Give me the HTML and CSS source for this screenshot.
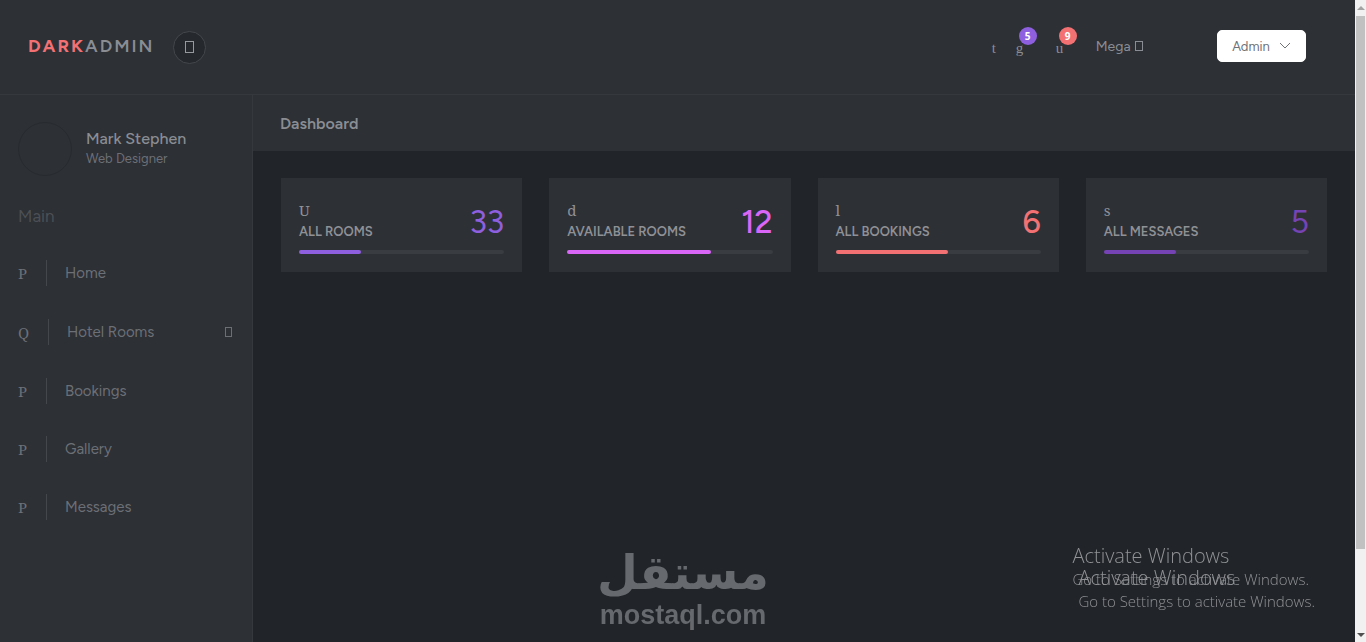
FILE: index.html
```html
<!DOCTYPE html>
<html lang="en">
<head>
<meta charset="UTF-8">
<meta name="viewport" content="width=device-width, initial-scale=1.0">
<title>Dark Admin</title>
<link rel="stylesheet" href="styles.css">
</head>
<body>
<div class="page">
  <header class="header">
    <div class="brand-area">
      <a href="#" class="brand"><strong>DARK</strong>ADMIN</a>
      <button class="sidebar-toggle" aria-label="Toggle sidebar"><span class="box"></span></button>
    </div>
    <nav class="right-menu">
      <a href="#" class="icon-link search">t</a>
      <a href="#" class="icon-link">g<span class="badge badge-1">5</span></a>
      <a href="#" class="icon-link">u<span class="badge badge-3">9</span></a>
      <a href="#" class="mega">Mega <span class="box box-sm"></span></a>
      <button class="admin">Admin
        <svg width="12" height="8" viewBox="0 0 12 8"><path d="M1 1l5 5 5-5" fill="none" stroke="currentColor"/></svg>
      </button>
    </nav>
  </header>
  <div class="main">
    <aside class="sidebar">
      <div class="profile">
        <div class="avatar"></div>
        <div>
          <h1>Mark Stephen</h1>
          <p>Web Designer</p>
        </div>
      </div>
      <span class="heading">Main</span>
      <ul class="menu">
        <li><a href="#"><i>P</i><span class="label">Home</span></a></li>
        <li><a href="#" class="dropdown"><i>Q</i><span class="label">Hotel Rooms</span><span class="box box-sm"></span></a></li>
        <li><a href="#"><i>P</i><span class="label">Bookings</span></a></li>
        <li><a href="#"><i>P</i><span class="label">Gallery</span></a></li>
        <li><a href="#"><i>P</i><span class="label">Messages</span></a></li>
      </ul>
    </aside>
    <div class="content">
      <div class="page-header"><h2>Dashboard</h2></div>
      <section class="stats">
        <div class="stat stat-1">
          <div class="details"><div class="title"><i>U</i><strong>ALL ROOMS</strong></div><div class="number">33</div></div>
          <div class="progress"><div class="bar" style="width: 30%"></div></div>
        </div>
        <div class="stat stat-2">
          <div class="details"><div class="title"><i>d</i><strong>AVAILABLE ROOMS</strong></div><div class="number">12</div></div>
          <div class="progress"><div class="bar" style="width: 70%"></div></div>
        </div>
        <div class="stat stat-3">
          <div class="details"><div class="title"><i>l</i><strong>ALL BOOKINGS</strong></div><div class="number">6</div></div>
          <div class="progress"><div class="bar" style="width: 55%"></div></div>
        </div>
        <div class="stat stat-4">
          <div class="details"><div class="title"><i>s</i><strong>ALL MESSAGES</strong></div><div class="number">5</div></div>
          <div class="progress"><div class="bar" style="width: 35%"></div></div>
        </div>
      </section>
    </div>
  </div>
</div>
<div class="scrollbar"><span class="arrow up"></span><span class="thumb"></span><span class="arrow down"></span></div>
<div class="watermark">
  <span class="watermark-ar" lang="ar" dir="rtl">مستقل</span>
  <span class="watermark-en">mostaql.com</span>
</div>
<div class="activate activate-back"><h3>Activate Windows</h3><p>Go to Settings to activate Windows.</p></div>
<div class="activate activate-front"><h3>Activate Windows</h3><p>Go to Settings to activate Windows.</p></div>
</body>
</html>
```
FILE: styles.css
```css
:root {
  --panel: #2d3035;
  --dark: #212429;
  --line: #35383d;
  --text: #8a8d93;
  --muted: #6c6f75;
  --violet: #8e5fdf;
  --pink: #da66f8;
  --red: #f47173;
  --purple: #7643b5;
}
* { box-sizing: border-box; }
body { margin: 0; background: var(--dark); color: var(--text); font-family: Figtree, Lato, sans-serif; font-size: 15px; overflow: hidden; }
h1, h2, h3, p, ul { margin: 0; padding: 0; }
a { color: inherit; text-decoration: none; }
i { font-family: "Noto Serif", "Liberation Serif", serif; font-style: normal; }
button { font: inherit; cursor: pointer; }

.page { min-height: 100vh; margin-right: 11px; display: flex; flex-direction: column; }
.header { height: 95px; padding: 0 49px 2px 28px; background: var(--panel); border-bottom: 1px solid var(--line); display: flex; align-items: center; justify-content: space-between; }
.brand-area { display: flex; align-items: center; gap: 18px; }
.brand { font-size: 18px; letter-spacing: 2px; line-height: 28px; font-weight: 600; }
.brand strong { color: var(--red); font-weight: 700; }
.sidebar-toggle { width: 33px; height: 33px; margin-top: 2px; padding: 0; border: 1px solid #44474c; border-radius: 50%; background: #25282d; color: #96999e; display: flex; align-items: center; justify-content: center; }
.box { display: inline-block; width: 9px; height: 12px; border: 1px solid currentColor; }
.box-sm { width: 7px; height: 10px; }

.right-menu { display: flex; align-items: center; }
.icon-link { position: relative; width: 20px; margin-right: 20px; padding-top: 4px; font-family: "Liberation Serif", serif; font-size: 15px; }
.search { margin-right: 4px; }
.badge { position: absolute; top: -9px; left: 3px; width: 18px; height: 18px; border-radius: 50%; color: #fff; font: 700 10px/18px "Open Sans", sans-serif; text-align: center; }
.badge-1 { background: var(--violet); }
.badge-3 { background: var(--red); }
.mega { margin-right: 74px; font-size: 14px; }
.mega .box { width: 8px; margin-left: 1px; }
.admin { width: 89px; height: 32px; padding: 0; border: 1px solid #fff; border-radius: 5px; background: #fff; color: #6f7277; font-size: 13px; display: flex; align-items: center; justify-content: center; gap: 9px; }

.main { flex: 1; display: flex; }
.sidebar { width: 253px; background: var(--panel); border-right: 1px solid var(--line); }
.profile { display: flex; align-items: center; gap: 14px; padding: 27px 18px; }
.avatar { width: 54px; height: 54px; border: 1px solid #272a2f; border-radius: 50%; }
.profile h1 { font-size: 16px; font-weight: 500; line-height: 20px; }
.profile p { font-size: 13px; line-height: 20px; color: var(--muted); }
.heading { display: block; padding: 0 18px; font-size: 17px; line-height: 26px; color: #4c4f54; }
.menu { list-style: none; margin-top: 15px; }
.menu a { display: flex; align-items: center; height: 58px; padding: 0 20px 0 18px; color: var(--muted); }
.menu i { width: 29px; margin-right: 18px; border-right: 1px solid #44474c; line-height: 26px; }
.menu .dropdown { height: 60px; }
.menu .dropdown i { width: 31px; }
.menu .box { margin-left: auto; }

.content { flex: 1; min-width: 0; }
.page-header { height: 56px; padding: 0 27px; background: var(--panel); display: flex; align-items: center; }
.page-header h2 { font-size: 16px; font-weight: 600; }
.stats { display: grid; grid-template-columns: repeat(4, 1fr); gap: 27px; padding: 27px 28px; }
.stat { height: 94px; padding: 22px 18px 0; background: var(--panel); color: var(--accent); }
.stat-1 { --accent: var(--violet); }
.stat-2 { --accent: var(--pink); }
.stat-3 { --accent: var(--red); }
.stat-4 { --accent: var(--purple); }
.details { display: flex; align-items: center; justify-content: space-between; }
.title { color: #8f9195; }
.title i { display: block; font-size: 15px; line-height: 20px; }
.title strong { display: block; font-size: 13px; font-weight: 600; line-height: 24px; }
.number { font-size: 32px; line-height: 44px; }
.stat-2 .number, .stat-3 .number { font-weight: 500; }
.progress { height: 4px; margin-top: 6px; border-radius: 2px; background: #393c41; }
.bar { height: 4px; border-radius: 2px; background: var(--accent); }

.scrollbar { position: fixed; top: 0; right: 0; bottom: 0; width: 11px; background: #f1f1f1; display: flex; flex-direction: column; align-items: center; justify-content: space-between; }
.thumb { width: 9px; flex: 1; margin: 6px 0 84px; background: #c1c1c1; }
.arrow { border: 4px solid transparent; }
.up { margin-top: 6px; border-top: 0; border-bottom-color: #a3a3a3; }
.down { margin-bottom: 5px; border-bottom: 0; border-top-color: #505050; }

.watermark { position: fixed; left: 50%; bottom: 12px; width: 166px; margin-left: -83px; color: #66696d; display: flex; flex-direction: column; align-items: center; }
.watermark-ar { font: 700 47px/54px "DejaVu Sans", sans-serif; }
.watermark-en { font: 700 27px/30px "Liberation Sans", sans-serif; }
.activate { position: fixed; color: #909295; font-family: "Segoe UI", "Open Sans", sans-serif; white-space: nowrap; }
.activate h3 { font-size: 20px; font-weight: 300; line-height: 24px; }
.activate p { font-size: 15px; font-weight: 300; line-height: 22px; }
.activate-back { right: 57px; bottom: 52px; }
.activate-front { right: 51px; bottom: 30px; }
```
